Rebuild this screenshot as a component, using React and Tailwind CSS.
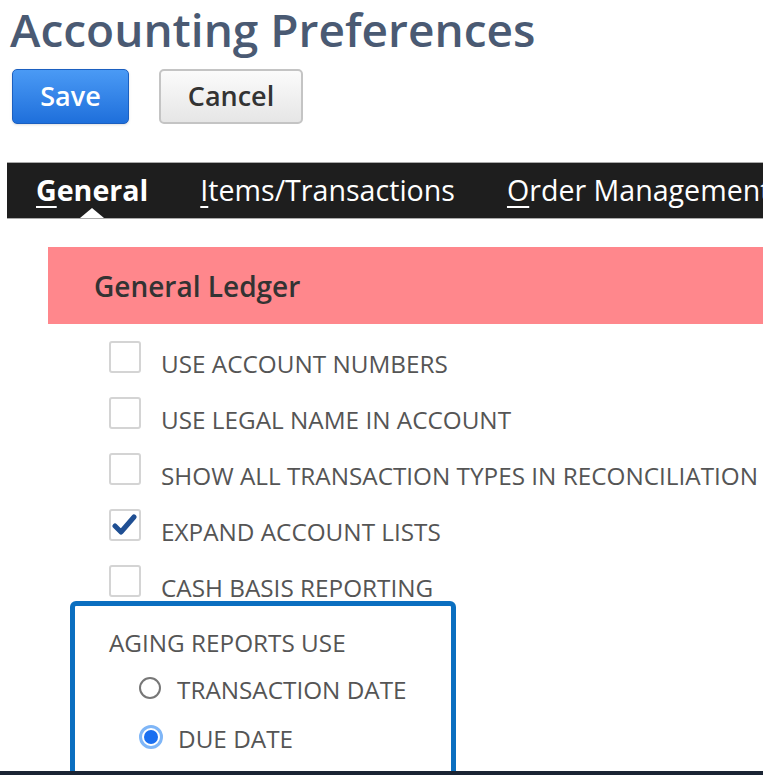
const options = [
  { label: "USE ACCOUNT NUMBERS", checked: false },
  { label: "USE LEGAL NAME IN ACCOUNT", checked: false },
  { label: "SHOW ALL TRANSACTION TYPES IN RECONCILIATION", checked: false },
  { label: "EXPAND ACCOUNT LISTS", checked: true },
  { label: "CASH BASIS REPORTING", checked: false },
];

function Checkbox({ checked }) {
  return (
    <div className="w-[32px] h-[32px] shrink-0 border-2 border-[#d4d4d4] rounded-[3px] bg-white flex items-center justify-center">
      {checked && (
        <svg width="26" height="22" viewBox="0 0 26 22">
          <path d="M3 12 L9 18 L22 3" fill="none" stroke="#1f4f93" strokeWidth="5" strokeLinecap="round" strokeLinejoin="round" />
        </svg>
      )}
    </div>
  );
}

function Radio({ checked }) {
  return checked ? (
    <div className="w-[24px] h-[24px] rounded-full bg-white border-[3px] border-[#7fb6f7] flex items-center justify-center">
      <div className="w-[14px] h-[14px] rounded-full bg-[#1a6ff0]" />
    </div>
  ) : (
    <div className="w-[22px] h-[22px] rounded-full bg-white border-2 border-[#777]" />
  );
}

function Tab({ first, rest, active }) {
  return (
    <div className="relative h-full flex items-center shrink-0">
      <span className={active ? "font-bold" : "font-normal"}>
        <span className="underline underline-offset-[5px] decoration-2">{first}</span>
        {rest}
      </span>
      {active && (
        <div className="absolute bottom-0 left-1/2 -translate-x-1/2 w-0 h-0 border-l-[12px] border-r-[12px] border-b-[10px] border-l-transparent border-r-transparent border-b-white" />
      )}
    </div>
  );
}

export default function App() {
  return (
    <div className="w-[763px] h-[775px] overflow-hidden bg-white relative" style={{ fontFamily: "'Open Sans', sans-serif" }}>
      <h1 className="pl-[10px] text-[46px] leading-[60px] -mt-[1px] font-semibold text-[#4a5a73] whitespace-nowrap">
        Accounting Preferences
      </h1>
      <div className="flex gap-[30px] pl-[12px] mt-[10px]">
        <button className="w-[117px] h-[55px] rounded-[5px] border border-[#1b5fc0] bg-gradient-to-b from-[#4a9af5] to-[#1e6fdb] text-white text-[27px] font-semibold shadow-sm">
          Save
        </button>
        <button className="w-[144px] h-[55px] rounded-[5px] border-2 border-[#c4c4c4] bg-gradient-to-b from-[#fbfbfb] to-[#e6e6e6] text-[#333] text-[27px] font-semibold">
          Cancel
        </button>
      </div>
      <div className="ml-[7px] mt-[38px] h-[57px] bg-[#1e1e1e] border-y border-[#aaa] flex gap-[52px] pl-[29px] text-white text-[28.6px] whitespace-nowrap overflow-hidden">
        <Tab first="G" rest="eneral" active />
        <Tab first="I" rest="tems/Transactions" />
        <Tab first="O" rest="rder Management" />
      </div>
      <div className="ml-[48px] mt-[28px] h-[77px] bg-[#ff878c] flex items-center pl-[46px] text-[28px] font-semibold text-[#333]">
        General Ledger
      </div>
      <div className="pl-[109px] pt-[17px] flex flex-col gap-[24px]">
        {options.map((o) => (
          <div key={o.label} className="flex items-center gap-[20px] h-[32px]">
            <Checkbox checked={o.checked} />
            <span className="text-[24.3px] text-[#555] whitespace-nowrap mt-[14px]">{o.label}</span>
          </div>
        ))}
      </div>
      <div className="ml-[70px] mt-[4px] w-[386px] h-[180px] border-[5px] border-[#0b6fc0] rounded-[6px] pl-[34px] pt-[20px]">
        <div className="text-[24.3px] text-[#555] leading-[34px]">AGING REPORTS USE</div>
        <div className="pl-[30px] mt-[16px] flex flex-col gap-[25px]">
          <div className="flex items-center gap-[16px] h-[24px]">
            <Radio />
            <span className="text-[24.3px] text-[#555] mt-[4px]">TRANSACTION DATE</span>
          </div>
          <div className="flex items-center gap-[15px] h-[24px]">
            <Radio checked />
            <span className="text-[24.3px] text-[#555] mt-[4px]">DUE DATE</span>
          </div>
        </div>
      </div>
      <div className="absolute left-0 right-0 bottom-0 h-[4px] bg-[#1a2433]" />
    </div>
  );
}
